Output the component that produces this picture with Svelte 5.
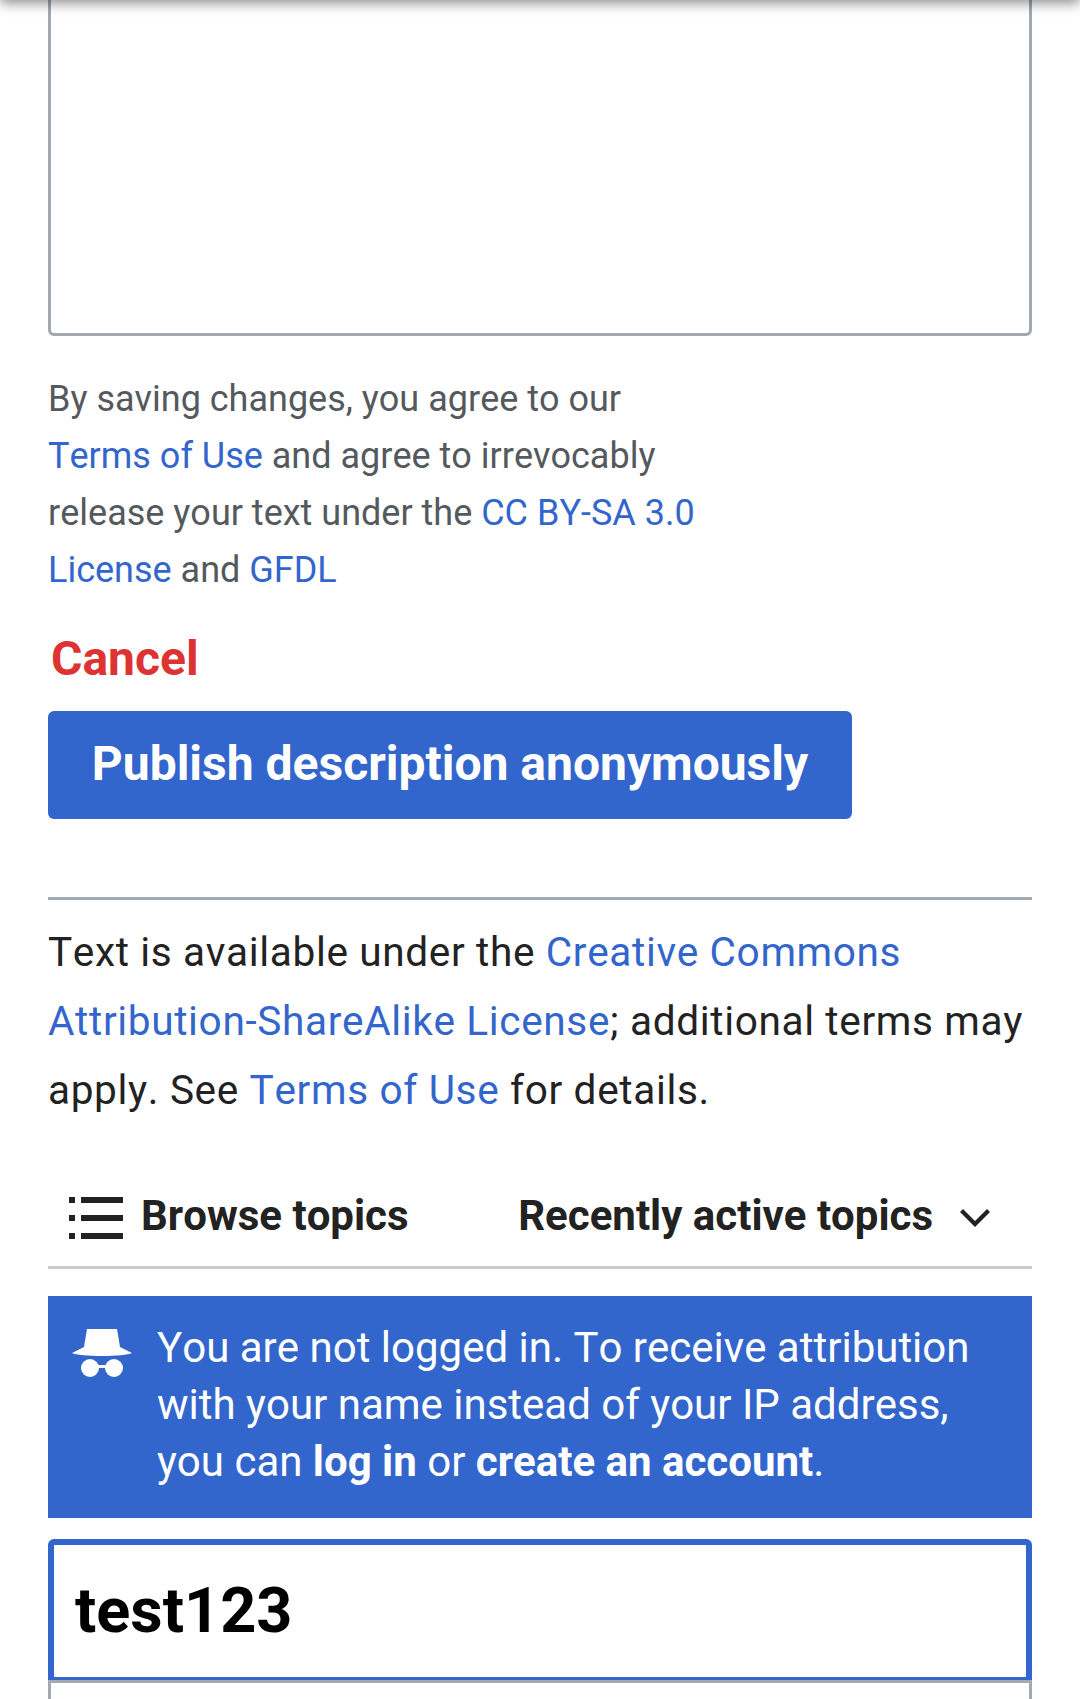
<script>
  let title = $state('test123');
  let body = $state('');
</script>

<div class="screen">
  <div class="toolbar-shadow"></div>

  <div class="description-editor"></div>

  <p class="terms">
    By saving changes, you agree to our <a href="#terms">Terms of Use</a> and agree to irrevocably
    release your text under the <a href="#license">CC BY-SA 3.0 License</a> and <a href="#gfdl">GFDL</a>
  </p>

  <div class="actions">
    <button class="cancel" type="button">Cancel</button>
    <button class="publish" type="button">Publish description anonymously</button>
  </div>

  <p class="copyright">
    Text is available under the <a href="#cc">Creative Commons Attribution-ShareAlike License</a>; additional
    terms may apply. See <a href="#terms">Terms of Use</a> for details.
  </p>

  <nav class="topics">
    <button class="browse" type="button">
      <svg width="54" height="42" viewBox="0 0 54 42" aria-hidden="true">
        <path d="M0 0h6v6H0zM12 0h42v6H12zM0 18h6v6H0zM12 18h42v6H12zM0 36h6v6H0zM12 36h42v6H12z" />
      </svg>
      <span>Browse topics</span>
    </button>
    <button class="sort" type="button">
      <span>Recently active topics</span>
      <svg width="30" height="18" viewBox="0 0 30 18" aria-hidden="true">
        <path d="M3 0 0 3l15 15L30 3l-3-3-12 12z" />
      </svg>
    </button>
  </nav>

  <aside class="notice">
    <svg width="60" height="48" viewBox="0 0 60 48" aria-hidden="true">
      <path d="M15 0h30l3 18 12 6c-7 4-53 4-60 0l12-6z" />
      <circle cx="18" cy="39" r="9" />
      <circle cx="42" cy="39" r="9" />
      <path d="M24 36h12v3H24z" />
    </svg>
    <p>
      You are not logged in. To receive attribution with your name instead of your IP address, you can
      <a href="#login">log in</a> or <a href="#create">create an account</a>.
    </p>
  </aside>

  <form class="new-topic">
    <input type="text" aria-label="Topic title" bind:value={title} />
    <textarea aria-label="Topic message" bind:value={body}></textarea>
  </form>
</div>

<style>
  :global(body) {
    margin: 0;
    background: #fff;
  }

  .screen {
    position: relative;
    box-sizing: border-box;
    width: 1080px;
    height: 1699px;
    padding: 0 48px;
    overflow: hidden;
    font-family: Roboto, 'Liberation Sans', sans-serif;
    font-kerning: none;
    color: #222;
    background: #fff;
  }

  .toolbar-shadow {
    position: absolute;
    top: -60px;
    left: 0;
    width: 100%;
    height: 60px;
    box-shadow: 0 3px 12px rgba(0, 0, 0, 0.46);
  }

  .description-editor {
    box-sizing: border-box;
    height: 336px;
    border: 3px solid #a2a9b1;
    border-top: 0;
    border-radius: 0 0 6px 6px;
  }

  p {
    margin: 0;
  }

  a {
    color: #36c;
    text-decoration: none;
  }

  button {
    padding: 0;
    border: 0;
    background: none;
    font: inherit;
    font-kerning: none;
    font-weight: 700;
    color: inherit;
  }

  .terms {
    width: 660px;
    padding-top: 35px;
    font-size: 36px;
    line-height: 57px;
    color: #54595d;
  }

  .actions {
    display: flex;
    flex-direction: column;
    align-items: flex-start;
    height: 301px;
    box-sizing: border-box;
    padding-top: 30px;
    border-bottom: 3px solid #a2a9b1;
    font-size: 48px;
    line-height: 57px;
  }

  .cancel {
    height: 82px;
    padding: 1px 3px 24px;
    color: #d33;
  }

  .publish {
    width: 804px;
    height: 108px;
    padding-bottom: 3px;
    border-radius: 6px;
    background: #36c;
    color: #fff;
  }

  .copyright {
    padding-top: 18px;
    font-size: 40.6px;
    line-height: 69px;
    letter-spacing: 0.63px;
  }

  .topics {
    display: flex;
    justify-content: space-between;
    align-items: center;
    box-sizing: border-box;
    height: 103px;
    margin-top: 41px;
    padding: 0 42px 1px 21px;
    border-bottom: 3px solid #c8ccd1;
    font-size: 42px;
    line-height: 60px;
  }

  .topics button {
    display: flex;
    align-items: center;
  }

  .topics svg {
    fill: #222;
  }

  .browse {
    gap: 18px;
  }

  .browse svg {
    margin-top: 4px;
  }

  .sort {
    gap: 27px;
  }

  .sort svg {
    margin-top: 4px;
  }

  .notice {
    display: flex;
    box-sizing: border-box;
    height: 222px;
    margin-top: 27px;
    padding: 23px 24px 0;
    background: #36c;
    color: #fff;
    font-size: 42px;
    line-height: 57px;
  }

  .notice svg {
    flex: none;
    margin: 10px 25px 0 0;
    fill: #fff;
  }

  .notice a {
    color: #fff;
    font-weight: 700;
  }

  .new-topic {
    display: flex;
    flex-direction: column;
    margin-top: 21px;
  }

  input,
  textarea {
    display: block;
    box-sizing: border-box;
    width: 100%;
    margin: 0;
    outline: 0;
    background: #fff;
    font-family: inherit;
  }

  input {
    height: 141px;
    padding: 0 21px 2px;
    border: 6px solid #36c;
    border-bottom-width: 3px;
    border-radius: 6px 6px 0 0;
    font-size: 63px;
    font-weight: 700;
    color: #000;
  }

  textarea {
    height: 240px;
    border: 3px solid #a2a9b1;
    resize: none;
  }
</style>
